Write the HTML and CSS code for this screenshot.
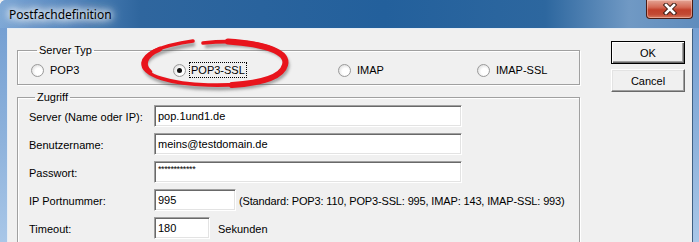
FILE: index.html
```html
<!DOCTYPE html>
<html lang="de">
<head>
    <meta charset="UTF-8">
    <title>Postfachdefinition</title>
    <link rel="stylesheet" href="styles.css">
</head>
<body>
    <div class="window">
        <div class="titlebar">
            <span class="title">Postfachdefinition</span>
            <div class="close-btn">
                <svg width="18" height="12" viewBox="0 0 18 12">
                    <path d="M5,2 L13,10 M13,2 L5,10" stroke="#3a1a12" stroke-width="4.5" stroke-linecap="square"/>
                    <path d="M5,2 L13,10 M13,2 L5,10" stroke="#ffffff" stroke-width="2.6" stroke-linecap="square"/>
                </svg>
            </div>
        </div>

        <div class="client">
            <div class="main">
                <fieldset class="group server-typ">
                    <legend>Server Typ</legend>
                    <div class="radio-row">
                        <label class="radio-item"><span class="radio"></span>POP3</label>
                        <label class="radio-item"><span class="radio checked"></span><span class="focus">POP3-SSL</span></label>
                        <label class="radio-item"><span class="radio"></span>IMAP</label>
                        <label class="radio-item"><span class="radio"></span>IMAP-SSL</label>
                    </div>
                </fieldset>

                <fieldset class="group zugriff">
                    <legend>Zugriff</legend>
                    <div class="form-grid">
                        <span class="label">Server (Name oder IP):</span>
                        <div class="field"><span class="textbox wide">pop.1und1.de</span></div>

                        <span class="label">Benutzername:</span>
                        <div class="field"><span class="textbox wide">meins@testdomain.de</span></div>

                        <span class="label">Passwort:</span>
                        <div class="field"><span class="textbox wide password">************</span></div>

                        <span class="label">IP Portnummer:</span>
                        <div class="field">
                            <span class="textbox port">995</span>
                            <span class="hint">(Standard: POP3: 110, POP3-SSL: 995, IMAP: 143, IMAP-SSL: 993)</span>
                        </div>

                        <span class="label">Timeout:</span>
                        <div class="field">
                            <span class="textbox timeout">180</span>
                            <span class="hint unit">Sekunden</span>
                        </div>
                    </div>
                </fieldset>
            </div>

            <div class="buttons">
                <button class="btn default">OK</button>
                <button class="btn">Cancel</button>
            </div>
        </div>
    </div>

    <!-- red marker drawn over the dialog -->
    <svg class="marker" width="699" height="242" viewBox="0 0 699 242">
        <defs>
            <filter id="soft" x="-20%" y="-40%" width="140%" height="180%">
                <feGaussianBlur stdDeviation="1.6"/>
            </filter>
        </defs>
        <g filter="url(#soft)" opacity="0.5" transform="translate(2,3)">
            <path d="M203,43 C250,38 290,48 285,65 C281,81 245,86 208,85 C172,84 142,76 143,63 C144,52 166,45 193,41" fill="none" stroke="#505050" stroke-width="4.5"/>
        </g>
        <path d="M203,43 C250,38 290,48 285,65 C281,81 245,86 208,85 C172,84 142,76 143,63 C144,52 166,45 193,41" fill="none" stroke="#e8141c" stroke-width="3.6" stroke-linecap="round"/>
        <path d="M228,41.5 C265,44 289,52 285,65 C282,77 262,83 232,85" fill="none" stroke="#e8141c" stroke-width="6" stroke-linecap="round"/>
        <path d="M150,72 C143,66 143,56 160,49" fill="none" stroke="#e8141c" stroke-width="4.6" stroke-linecap="round"/>
    </svg>
</body>
</html>
```

FILE: styles.css
```css
body {
    margin: 0;
    font-family: "Liberation Sans", Arial, sans-serif;
    font-size: 11px;
    color: #000;
    background: #f0f0f0;
}

.window {
    width: 699px;
    height: 242px;
    overflow: hidden;
    background: linear-gradient(to bottom, #6f9bd0 0, #8fb3dc 60%, #a9c7e8 100%);
    border-top-left-radius: 6px;
}

.titlebar {
    height: 28px;
    display: flex;
    justify-content: space-between;
    align-items: flex-start;
    background: linear-gradient(to right, #7ea8d6 0, #5b8cc2 8%, #2f669e 20%, #23609c 55%, #2d679f 78%, #7099c4 90%, #5f8cbd 100%);
}

.title {
    padding-left: 9px;
    padding-top: 7px;
    font-family: "Noto Sans", "Open Sans", sans-serif;
    font-size: 12px;
    line-height: 16px;
    color: #000;
    text-shadow: 0 0 6px #fff, 0 0 8px #fff, 0 0 12px #fff, 0 0 14px #fff;
}

.close-btn {
    width: 45px;
    height: 18px;
    margin-right: 6px;
    display: flex;
    justify-content: center;
    align-items: center;
    border: 1px solid #4a1c14;
    border-top: none;
    border-radius: 0 0 4px 4px;
    background: linear-gradient(to bottom, #e4a595 0, #d46a55 40%, #c1402a 55%, #c24a34 80%, #d77a5e 100%);
    box-shadow: inset 0 0 0 1px rgba(255, 220, 210, 0.45);
}

.client {
    display: flex;
    align-items: flex-start;
    margin: 0 6px 0 7px;
    padding: 12px 7px 0 9px;
    height: 214px;
    background: #f0f0f0;
    border-left: 1px solid #e6edf5;
    border-top: 1px solid #e6edf5;
    border-right: 1px solid #3f5f82;
}

.main {
    width: 563px;
    padding-top: 2px;
}

.group {
    margin: 0;
    padding: 0;
    min-width: 0;
    border: 1px solid #a0a0a0;
    box-shadow: 1px 1px 0 #fff, inset 1px 1px 0 #fff;
}

.group legend {
    margin-left: 6px;
    padding: 0 2px;
    line-height: 14px;
    font-size: 11px;
}

.server-typ {
    padding: 4px 0 5px 13px;
}

.radio-row {
    display: grid;
    grid-template-columns: 142px 165px 139px auto;
    align-items: center;
    height: 18px;
}

.radio-item {
    display: flex;
    align-items: center;
    gap: 6px;
    font-size: 11px;
}

.radio {
    width: 11px;
    height: 11px;
    border-radius: 50%;
    border: 1px solid #9a9a9a;
    background: radial-gradient(circle at 60% 60%, #fff 0, #fff 35%, #e2e2e2 75%, #cfcfcf 100%);
    position: relative;
}

.radio.checked::after {
    content: "";
    position: absolute;
    left: 3px;
    top: 3px;
    width: 5px;
    height: 5px;
    border-radius: 50%;
    background: #111;
}

.focus {
    outline: 1px dotted #000;
    outline-offset: 0;
    padding: 1px 1px;
    margin-left: -2px;
}

.zugriff {
    margin-top: 5px;
    padding: 1px 0 10px 11px;
}

.form-grid {
    display: grid;
    grid-template-columns: 125px auto;
    row-gap: 6px;
    align-items: center;
}

.label {
    font-size: 11px;
    padding-top: 2px;
}

.field {
    display: flex;
    align-items: center;
    height: 22px;
}

.textbox {
    box-sizing: border-box;
    height: 22px;
    padding: 2px 3px 0;
    font-size: 11px;
    line-height: 16px;
    background: #fff;
    border: 1px solid;
    border-color: #a0a0a0 #fff #fff #a0a0a0;
    box-shadow: inset 1px 1px 0 #696969, inset -1px -1px 0 #e3e3e3;
}

.textbox.wide {
    width: 308px;
}

.textbox.port {
    width: 82px;
}

.textbox.timeout {
    width: 56px;
}

.textbox.password {
    font-size: 9px;
    line-height: 10px;
    letter-spacing: -0.4px;
}

.hint {
    margin-left: 3px;
    font-size: 11px;
    letter-spacing: -0.15px;
    padding-top: 2px;
}

.hint.unit {
    margin-left: 8px;
    letter-spacing: 0;
}

.buttons {
    display: flex;
    flex-direction: column;
    gap: 5px;
    margin-left: 31px;
}

.btn {
    width: 74px;
    height: 23px;
    padding: 0;
    font-family: "Liberation Sans", Arial, sans-serif;
    font-size: 11px;
    background: #f0f0f0;
    border: 1px solid;
    border-color: #fff #696969 #696969 #fff;
    box-shadow: inset -1px -1px 0 #a0a0a0, inset 1px 1px 0 #e3e3e3;
}

.btn.default {
    border: 1px solid #000;
    box-shadow: inset 1px 1px 0 #fff, inset -1px -1px 0 #696969, inset -2px -2px 0 #a0a0a0;
}

.marker {
    position: absolute;
    left: 0;
    top: 0;
    pointer-events: none;
}
```
